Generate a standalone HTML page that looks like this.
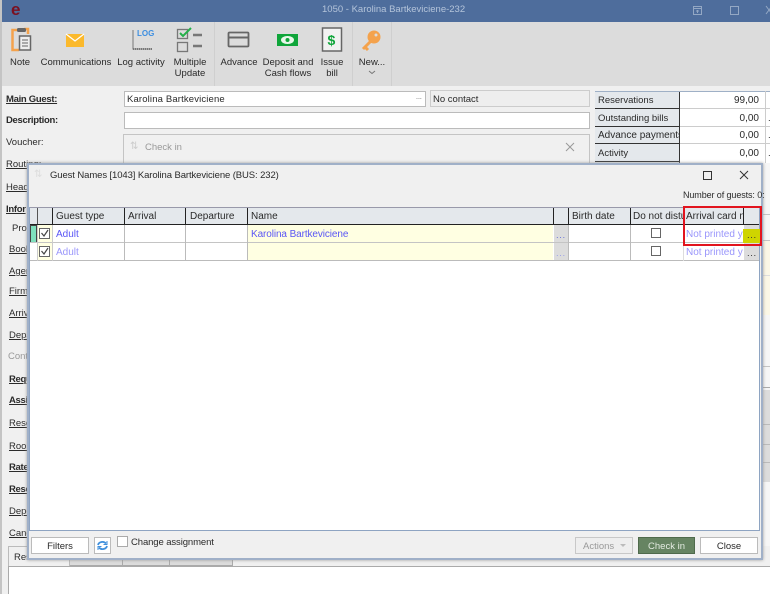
<!DOCTYPE html>
<html><head><meta charset="utf-8"><style>
*{box-sizing:border-box}
html,body{margin:0;padding:0}
body{width:770px;height:594px;overflow:hidden;position:relative;background:#f0f0f0;font-family:"Liberation Sans",sans-serif;font-size:9.5px;color:#2a2a2a}
#w{position:absolute;left:0;top:0;width:770px;height:594px;overflow:hidden;filter:blur(.35px)}
.a,.t{position:absolute}
.t{white-space:nowrap;line-height:12px;margin-top:1px}
.a>.t{margin-top:0}
.c{text-align:center;transform:translateX(-50%)}
.b{font-weight:bold;letter-spacing:-.3px}.u{text-decoration:underline}
.bl{color:#5a56f5;font-size:10px}.li{color:#9a96fb;font-size:10px}
.h{background:#e4e8ec}
.g{font-size:10px}
.k{border:1px solid #666;background:#fff}
.btn{line-height:17px}
</style></head><body><div id="w">
<!-- base -->
<div class="a" style="left:0;top:0;width:2px;height:594px;background:#c4c4c4"></div>
<div class="a" style="left:2px;top:0;width:768px;height:22px;background:#4e6d9c"></div>
<div class="t" style="left:11px;top:0;font:bold 17px/18px 'Liberation Sans',sans-serif;color:#7a1020">e</div>
<div class="t" style="left:322px;top:3px;color:#b4c4da">1050 - Karolina Bartkeviciene-232</div>
<svg class="a" style="left:690px;top:3px" width="80" height="14" fill="none" stroke="#94a8c4"><path d="M3.500 3.500h8v8h-8zM3.500 5.500h8M7.500 7v3M6 8h3"/><path d="M40.500 3.500h8v8h-8z"/><path d="M76 3l6 8M82 3l-6 8"/></svg>
<div class="a" style="left:2px;top:22px;width:768px;height:64px;background:#dcdcdc"></div>
<div class="a" style="left:214px;top:22px;width:1px;height:64px;background:#cfcfcf"></div>
<div class="a" style="left:352px;top:22px;width:1px;height:64px;background:#cfcfcf"></div>
<div class="a" style="left:391px;top:22px;width:1px;height:64px;background:#cfcfcf"></div>
<!-- toolbar icons -->
<svg class="a" style="left:0;top:22px" width="400" height="34" fill="none">
<path d="M20 8h-7.500v20H19" stroke="#f4a24c" stroke-width="2.500"/><path d="M24 7h4v5" stroke="#f4a24c" stroke-width="2.500"/>
<rect x="17" y="6" width="9" height="4" rx="1.500" fill="#666"/>
<rect x="19.500" y="14" width="11" height="14" fill="#eee" stroke="#666" stroke-width="1.500"/><path d="M22 18h6M22 21h6M22 24h6" stroke="#666"/>
<path d="M66 12h18v13H66z" fill="#fbb92c"/><path d="M66 12l9 7 9-7" stroke="#fff" stroke-width="1.200"/>
<path d="M133 8v19h19" stroke="#777"/><path d="M133 27h19" stroke="#777" stroke-width="2" stroke-dasharray="1 1"/>
<text x="137" y="14" font-family="Liberation Sans,sans-serif" font-size="8" font-weight="bold" fill="#3c8ee0">LOG</text>
<rect x="177.500" y="7.500" width="10" height="9" stroke="#777" stroke-width="1.300"/><path d="M180 11l3 3 8-8" stroke="#25b04a" stroke-width="2"/>
<rect x="177.500" y="20.500" width="10" height="9" stroke="#777" stroke-width="1.300"/><path d="M193 13h9M193 24h9" stroke="#777" stroke-width="2.500"/>
<rect x="228.500" y="10.500" width="20" height="14" rx="1" stroke="#666" stroke-width="1.800"/><path d="M229 15.500h19" stroke="#666" stroke-width="2"/>
<rect x="277" y="12" width="21" height="12" fill="#0fa53a"/><ellipse cx="287.500" cy="18" rx="6.500" ry="4" fill="#e8f7ea"/><circle cx="287.500" cy="18" r="2" fill="#0fa53a"/>
<rect x="322.500" y="6" width="19" height="23" fill="#f2f2f2" stroke="#666" stroke-width="1.500"/>
<text x="327.500" y="23" font-family="Liberation Sans,sans-serif" font-size="14" font-weight="bold" fill="#0fa53a">$</text>
<circle cx="374" cy="15" r="6.500" fill="#f4a24c"/><path d="M371 19l-8 8M365 25l3 3" stroke="#f4a24c" stroke-width="3"/><circle cx="376" cy="13" r="1.500" fill="#dcdcdc"/>
</svg>
<div class="t c" style="left:20px;top:56px">Note</div>
<div class="t c" style="left:76px;top:56px">Communications</div>
<div class="t c" style="left:141px;top:56px">Log activity</div>
<div class="t c" style="left:190px;top:56px">Multiple</div>
<div class="t c" style="left:190px;top:67px">Update</div>
<div class="t c" style="left:239px;top:56px">Advance</div>
<div class="t c" style="left:288px;top:56px">Deposit and</div>
<div class="t c" style="left:288px;top:67px">Cash flows</div>
<div class="t c" style="left:332px;top:56px">Issue</div>
<div class="t c" style="left:332px;top:67px">bill</div>
<div class="t c" style="left:372px;top:56px">New...</div>
<svg class="a" style="left:368px;top:70px" width="8" height="5" fill="none" stroke="#777"><path d="M1 1l3 2.500L7 1"/></svg>
<!-- form behind -->
<div class="t b u" style="left:6px;top:93px">Main Guest:</div>
<div class="t b" style="left:6px;top:114px">Description:</div>
<div class="t" style="left:6px;top:136px">Voucher:</div>
<div class="t u" style="left:6px;top:158px">Routing:</div>
<div class="t u" style="left:6px;top:181px">Head</div>
<div class="t b u" style="left:6px;top:203px">Infor</div>
<div class="t" style="left:12px;top:222px">Pro</div>
<div class="t u" style="left:9px;top:243px">Book</div>
<div class="t u" style="left:9px;top:265px">Agen</div>
<div class="t u" style="left:9px;top:285px">Firm</div>
<div class="t u" style="left:9px;top:307px">Arriv</div>
<div class="t u" style="left:9px;top:329px">Depa</div>
<div class="t" style="left:8px;top:350px;color:#999">Cont</div>
<div class="t b u" style="left:9px;top:373px">Requ</div>
<div class="t b u" style="left:9px;top:394px">Assi</div>
<div class="t u" style="left:9px;top:417px">Reso</div>
<div class="t u" style="left:9px;top:440px">Roor</div>
<div class="t b u" style="left:9px;top:461px">Rate</div>
<div class="t b u" style="left:9px;top:483px">Rese</div>
<div class="t u" style="left:9px;top:505px">Depo</div>
<div class="t u" style="left:9px;top:527px">Cano</div>
<div class="a" style="left:124px;top:91px;width:302px;height:16px;background:#fff;border:1px solid #bbb"></div>
<div class="t" style="left:127px;top:93px;letter-spacing:.15px">Karolina Bartkeviciene</div>
<div class="t" style="left:416px;top:91px;font-size:7px;color:#555">...</div>
<div class="a" style="left:430px;top:90px;width:160px;height:17px;background:#eee;border:1px solid #ccc"></div>
<div class="t" style="left:433px;top:93px">No contact</div>
<div class="a" style="left:124px;top:112px;width:466px;height:17px;background:#fff;border:1px solid #bbb"></div>
<div class="a" style="left:123px;top:134px;width:467px;height:30px;background:#f0f0f0;border:1px solid #c4c4c4"></div>
<div class="t" style="left:145px;top:141px;color:#999">Check in</div>
<div class="t" style="left:130px;top:140px;color:#ccc;font-size:10px">⇅</div>
<svg class="a" style="left:565px;top:142px" width="10" height="10" fill="none" stroke="#999"><path d="M1 1l8 8M9 1l-8 8"/></svg>
<!-- right table -->
<div class="a" style="left:595px;top:91px;width:175px;height:72px;background:#fff"></div>
<div class="a" style="left:595px;top:91px;width:85px;height:72px;background:#e4e8ec"></div>
<div class="a" style="left:679px;top:91px;width:1px;height:72px;background:#333"></div>
<div class="a" style="left:595px;top:91px;width:175px;height:1px;background:#9fb0c6"></div>
<div class="a" style="left:595px;top:108px;width:85px;height:1px;background:#333"></div>
<div class="a" style="left:595px;top:126px;width:85px;height:1px;background:#333"></div>
<div class="a" style="left:595px;top:143px;width:85px;height:1px;background:#333"></div>
<div class="a" style="left:595px;top:161px;width:85px;height:1px;background:#333"></div>
<div class="a" style="left:680px;top:108px;width:90px;height:1px;background:#ccc"></div>
<div class="a" style="left:680px;top:126px;width:90px;height:1px;background:#ccc"></div>
<div class="a" style="left:680px;top:143px;width:90px;height:1px;background:#ccc"></div>
<div class="a" style="left:765px;top:91px;width:1px;height:72px;background:#ccc"></div>
<div class="t" style="left:598px;top:94px">Reservations</div>
<div class="t" style="left:598px;top:112px">Outstanding bills</div>
<div class="a" style="left:598px;top:130px;width:81px;height:12px;overflow:hidden"><div class="t" style="left:0;top:0;font-size:10px">Advance payments</div></div>
<div class="t" style="left:598px;top:147px">Activity</div>
<div class="t" style="right:11px;top:94px;font-size:10px">99,00</div>
<div class="t" style="right:11px;top:112px;font-size:10px">0,00</div>
<div class="t" style="right:11px;top:129px;font-size:10px">0,00</div>
<div class="t" style="right:11px;top:147px;font-size:10px">0,00</div>
<div class="t" style="left:768px;top:112px">.</div><div class="t" style="left:768px;top:129px">.</div><div class="t" style="left:768px;top:147px">.</div>
<!-- right strip -->
<div class="a" style="left:763px;top:163px;width:7px;height:385px;background:#f6f6f6"></div>
<div class="a" style="left:763px;top:240px;width:7px;height:75px;background:#fbf7e6"></div>
<div class="a" style="left:763px;top:366px;width:7px;height:1px;background:#c4c4c4"></div>
<div class="a" style="left:763px;top:387px;width:7px;height:1px;background:#aaa"></div>
<div class="a" style="left:763px;top:390px;width:7px;height:92px;background:#dcdcdc"></div>
<div class="a" style="left:763px;top:214px;width:7px;height:1px;background:#c4c4c4"></div>
<div class="a" style="left:763px;top:240px;width:7px;height:1px;background:#c4c4c4"></div>
<div class="a" style="left:763px;top:275px;width:7px;height:1px;background:#ddd"></div>
<div class="a" style="left:763px;top:424px;width:7px;height:1px;background:#bbb"></div>
<div class="a" style="left:763px;top:444px;width:7px;height:1px;background:#bbb"></div>
<div class="a" style="left:763px;top:462px;width:7px;height:1px;background:#bbb"></div>
<!-- bottom tabs -->
<div class="a" style="left:8px;top:546px;width:762px;height:21px;background:#f0f0f0"></div>
<div class="a" style="left:70px;top:559px;width:162px;height:7px;background:#dcdcdc;border-bottom:1px solid #aaa"></div>
<div class="a" style="left:122px;top:559px;width:1px;height:7px;background:#aaa"></div>
<div class="a" style="left:169px;top:559px;width:1px;height:7px;background:#aaa"></div>
<div class="a" style="left:232px;top:559px;width:1px;height:7px;background:#aaa"></div>
<div class="a" style="left:8px;top:546px;width:62px;height:22px;background:#f0f0f0;border:1px solid #bbb;border-bottom:0"></div>
<div class="t" style="left:14px;top:551px">Res</div>
<div class="a" style="left:8px;top:566px;width:762px;height:28px;background:#fff;border:1px solid #aaa;border-right:0;border-bottom:0"></div>
<!-- dialog -->
<div class="a" style="left:27px;top:163px;width:736px;height:397px;background:#f0f0f0;border:2px solid #a0b0c8;box-shadow:0 0 3px #999"></div>
<div class="t" style="left:34px;top:168px;color:#ddd;font-size:10px">⇅</div>
<div class="t" style="left:50px;top:169px;letter-spacing:-.1px">Guest Names [1043] Karolina Bartkeviciene (BUS: 232)</div>
<svg class="a" style="left:700px;top:168px" width="56" height="14" fill="none" stroke="#333"><path d="M3.500 3.500h8v8h-8z"/><path d="M40 3l8 8M48 3l-8 8"/></svg>
<div class="t" style="left:683px;top:188px;font-size:9px;letter-spacing:-.1px">Number of guests: 0:</div>
<!-- grid -->
<div class="a" style="left:29px;top:207px;width:731px;height:324px;background:#fff;border:1px solid #8ea4c2"></div>
<div class="a h" style="left:30px;top:208px;width:729px;height:16px"></div>
<div class="a" style="left:30px;top:207px;width:729px;height:1px;background:#99a"></div>
<div class="a" style="left:30px;top:224px;width:729px;height:1px;background:#222"></div>
<div class="a" style="left:37px;top:208px;width:1px;height:16px;background:#555"></div>
<div class="a" style="left:52px;top:208px;width:1px;height:16px;background:#222"></div>
<div class="a" style="left:124px;top:208px;width:1px;height:16px;background:#222"></div>
<div class="a" style="left:185px;top:208px;width:1px;height:16px;background:#222"></div>
<div class="a" style="left:247px;top:208px;width:1px;height:16px;background:#222"></div>
<div class="a" style="left:553px;top:208px;width:1px;height:16px;background:#222"></div>
<div class="a" style="left:568px;top:208px;width:1px;height:16px;background:#222"></div>
<div class="a" style="left:630px;top:208px;width:1px;height:16px;background:#222"></div>
<div class="a" style="left:683px;top:208px;width:1px;height:16px;background:#222"></div>
<div class="a" style="left:743px;top:208px;width:1px;height:16px;background:#222"></div>
<div class="t g" style="left:56px;top:210px">Guest type</div>
<div class="t g" style="left:128px;top:210px">Arrival</div>
<div class="t g" style="left:190px;top:210px">Departure</div>
<div class="t g" style="left:251px;top:210px">Name</div>
<div class="t g" style="left:572px;top:210px">Birth date</div>
<div class="a" style="left:631px;top:211px;width:52px;height:12px;overflow:hidden"><div class="t g" style="left:2px;top:0">Do not disturb</div></div>
<div class="a" style="left:684px;top:211px;width:59px;height:12px;overflow:hidden"><div class="t g" style="left:2px;top:0">Arrival card no</div></div>
<!-- rows -->
<div class="a" style="left:30px;top:225px;width:7px;height:18px;background:#7fe0bd;border:1px solid #444"></div>
<div class="a" style="left:38px;top:225px;width:14px;height:35px;background:#ffffe2"></div>
<div class="a" style="left:248px;top:225px;width:305px;height:35px;background:#ffffe2"></div>
<div class="a" style="left:554px;top:225px;width:14px;height:35px;background:#dcdcdc"></div>
<div class="a" style="left:744px;top:225px;width:15px;height:35px;background:#dcdcdc"></div>
<div class="a" style="left:30px;top:242px;width:729px;height:1px;background:#c4c4c4"></div>
<div class="a" style="left:30px;top:260px;width:729px;height:1px;background:#bbb"></div>
<div class="a" style="left:37px;top:225px;width:1px;height:36px;background:#ccc"></div>
<div class="a" style="left:52px;top:225px;width:1px;height:36px;background:#ccc"></div>
<div class="a" style="left:124px;top:225px;width:1px;height:36px;background:#bbb"></div>
<div class="a" style="left:185px;top:225px;width:1px;height:36px;background:#bbb"></div>
<div class="a" style="left:247px;top:225px;width:1px;height:36px;background:#bbb"></div>
<div class="a" style="left:568px;top:225px;width:1px;height:36px;background:#bbb"></div>
<div class="a" style="left:630px;top:225px;width:1px;height:36px;background:#bbb"></div>
<div class="a" style="left:683px;top:225px;width:1px;height:36px;background:#ddd"></div>
<svg class="a" style="left:39px;top:228px" width="12" height="30" fill="none"><rect x=".5" y=".5" width="10" height="10" fill="#fff" stroke="#666"/><path d="M2.500 5l2.500 3L9 2" stroke="#444" stroke-width="1.200"/><rect x=".5" y="18.500" width="10" height="10" fill="#fff" stroke="#666"/><path d="M2.500 23l2.500 3L9 20" stroke="#444" stroke-width="1.200"/></svg>
<div class="t bl" style="left:56px;top:228px">Adult</div>
<div class="t li" style="left:56px;top:246px">Adult</div>
<div class="t bl" style="left:251px;top:228px;letter-spacing:-.1px">Karolina Bartkeviciene</div>
<div class="t" style="left:556px;top:229px;color:#6a74d8;letter-spacing:.6px">...</div>
<div class="t" style="left:556px;top:247px;color:#9aa0e8;letter-spacing:.6px">...</div>
<div class="a k" style="left:651px;top:228px;width:10px;height:10px"></div>
<div class="a k" style="left:651px;top:246px;width:10px;height:10px"></div>
<div class="a" style="left:686px;top:229px;width:57px;height:12px;overflow:hidden"><div class="t li" style="left:0;top:0">Not printed yet</div></div>
<div class="a" style="left:686px;top:247px;width:57px;height:12px;overflow:hidden"><div class="t li" style="left:0;top:0">Not printed yet</div></div>
<div class="a" style="left:743px;top:229px;width:17px;height:14px;background:#cfd400"></div>
<div class="t" style="left:747px;top:229px;color:#333;letter-spacing:.6px">...</div>
<div class="t" style="left:747px;top:247px;color:#333;letter-spacing:.6px">...</div>
<div class="a" style="left:683px;top:206px;width:79px;height:40px;border:2px solid #e2141e"></div>
<!-- footer -->
<div class="a btn" style="left:31px;top:537px;width:58px;height:17px;background:#fff;border:1px solid #bbb;text-align:center">Filters</div>
<div class="a" style="left:94px;top:537px;width:17px;height:17px;background:#fff;border:1px solid #bbb"></div>
<svg class="a" style="left:96px;top:540px" width="13" height="11" fill="none" stroke="#3f8fdc" stroke-width="1.800"><path d="M2 5a4.500 4 0 0 1 8-1.500M11 6a4.500 4 0 0 1-8 1.500"/><path d="M11 1v3.500H7.500M2 10V6.500h3.500" stroke-width="1"/></svg>
<div class="a" style="left:117px;top:536px;width:11px;height:11px;background:#fff;border:1px solid #aaa"></div>
<div class="t" style="left:131px;top:536px;letter-spacing:-.1px">Change assignment</div>
<div class="a btn" style="left:575px;top:537px;width:58px;height:17px;background:#eee;border:1px solid #c8c8c8;color:#999;padding-left:7px">Actions</div>
<svg class="a" style="left:620px;top:544px" width="7" height="4"><path d="M0 0h6L3 3z" fill="#bbb"/></svg>
<div class="a btn" style="left:638px;top:537px;width:57px;height:17px;background:#668462;border:1px solid #4f6a4c;color:#e4ece2;text-align:center">Check in</div>
<div class="a btn" style="left:700px;top:537px;width:58px;height:17px;background:#fff;border:1px solid #bbb;text-align:center">Close</div>
</div></body></html>
